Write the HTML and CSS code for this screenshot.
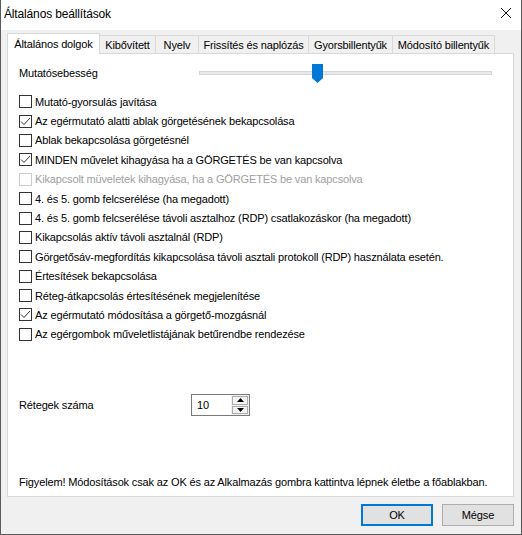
FILE: index.html
```html
<!DOCTYPE html>
<html lang="hu">
<head>
  <meta charset="UTF-8" />
  <meta name="viewport" content="width=device-width, initial-scale=1.0"/>
  <title>Általános beállítások</title>
  <link rel="stylesheet" href="styles.css">
</head>
<body>

  <div class="window">
    <header class="titlebar">
      <div class="title">Általános beállítások</div>
      <button class="btn-close" title="Bezárás">
        <svg width="10" height="10" viewBox="0 0 10 10">
          <path d="M0 0 L10 10 M10 0 L0 10" stroke="#111" stroke-width="1" fill="none"/>
        </svg>
      </button>
    </header>

    <div class="dialog-body">
      <div class="tabs">
        <div class="tab active">Általános dolgok</div>
        <div class="tab">Kibővített</div>
        <div class="tab">Nyelv</div>
        <div class="tab">Frissítés és naplózás</div>
        <div class="tab">Gyorsbillentyűk</div>
        <div class="tab">Módosító billentyűk</div>
      </div>

      <div class="panel">
        <div class="slider-row">
          <label class="slider-label">Mutatósebesség</label>
          <div class="slider">
            <div class="slider-track"></div>
            <svg class="slider-thumb" width="11" height="19" viewBox="0 0 11 19">
              <path d="M0 0 H11 V14 L5.5 19 L0 14 Z" fill="#0078d7"/>
            </svg>
          </div>
        </div>

        <div class="checklist">
          <div class="check-row"><span class="box"></span>Mutató-gyorsulás javítása</div>
          <div class="check-row"><span class="box checked"></span>Az egérmutató alatti ablak görgetésének bekapcsolása</div>
          <div class="check-row"><span class="box"></span>Ablak bekapcsolása görgetésnél</div>
          <div class="check-row"><span class="box checked"></span>MINDEN művelet kihagyása ha a GÖRGETÉS be van kapcsolva</div>
          <div class="check-row disabled"><span class="box"></span>Kikapcsolt müveletek kihagyása, ha a GÖRGETÉS be van kapcsolva</div>
          <div class="check-row"><span class="box"></span>4. és 5. gomb felcserélése (ha megadott)</div>
          <div class="check-row"><span class="box"></span>4. és 5. gomb felcserélése távoli asztalhoz (RDP) csatlakozáskor (ha megadott)</div>
          <div class="check-row"><span class="box"></span>Kikapcsolás aktív távoli asztalnál (RDP)</div>
          <div class="check-row"><span class="box"></span>Görgetősáv-megfordítás kikapcsolása távoli asztali protokoll (RDP) használata esetén.</div>
          <div class="check-row"><span class="box"></span>Értesítések bekapcsolása</div>
          <div class="check-row"><span class="box"></span>Réteg-átkapcsolás értesítésének megjelenítése</div>
          <div class="check-row"><span class="box checked"></span>Az egérmutató módosítása a görgető-mozgásnál</div>
          <div class="check-row"><span class="box"></span>Az egérgombok műveletlistájának betűrendbe rendezése</div>
        </div>

        <div class="layer-row">
          <label class="layer-label">Rétegek száma</label>
          <div class="spinner">
            <div class="spinner-value">10</div>
            <div class="spinner-buttons">
              <div class="spin-btn">
                <svg width="7" height="4" viewBox="0 0 7 4"><path d="M0 4 L3.5 0 L7 4 Z" fill="#000"/></svg>
              </div>
              <div class="spin-btn">
                <svg width="7" height="4" viewBox="0 0 7 4"><path d="M0 0 L7 0 L3.5 4 Z" fill="#000"/></svg>
              </div>
            </div>
          </div>
        </div>

        <p class="notice">Figyelem! Módosítások csak az OK és az Alkalmazás gombra kattintva lépnek életbe a főablakban.</p>
      </div>

      <div class="buttons">
        <button class="btn btn-default">OK</button>
        <button class="btn">Mégse</button>
      </div>
    </div>
  </div>

  <script>
    // pipák a bejelölt dobozokba
    document.querySelectorAll('.box.checked').forEach(function (box) {
      box.innerHTML = '<svg width="11" height="11" viewBox="0 0 11 11">' +
        '<path d="M1 5.5 L4 8.5 L10 2" stroke="#333" stroke-width="1" fill="none"/></svg>';
    });
  </script>
</body>
</html>
```

FILE: styles.css
```css
body {
  font-family: 'Liberation Sans', Arial, sans-serif;
  font-size: 11px;
  letter-spacing: -0.15px;
  color: #000;
  margin: 0;
  background: #fff;
}

.window {
  width: 522px;
  height: 535px;
  box-sizing: border-box;
  display: flex;
  flex-direction: column;
  background: #f0f0f0;
  border: 1px solid #5a5a5a;
  border-top: none;
}

.titlebar {
  height: 30px;
  background: #fff;
  display: flex;
  justify-content: space-between;
  align-items: center;
  padding-left: 3px;
}

.title {
  font-size: 12px;
  margin-top: -3px;
}

.btn-close {
  background: none;
  border: none;
  padding: 0;
  width: 10px;
  height: 10px;
  margin: -4px 10px 0 0;
  display: flex;
}

.dialog-body {
  flex: 1;
  display: flex;
  flex-direction: column;
  padding: 3px 7px 8px 6px;
}

/* fülek */
.tabs {
  display: grid;
  grid-template-columns: 93px 56px 43px 110px 84px 102px;
  height: 20px;
  align-items: end;
}

.tab {
  height: 18px;
  box-sizing: border-box;
  border: 1px solid #d9d9d9;
  border-bottom: none;
  border-left: none;
  display: flex;
  align-items: center;
  justify-content: center;
  background: #f0f0f0;
  white-space: nowrap;
}

.tab.active {
  height: 21px;
  margin-bottom: -1px;
  background: #fff;
  border-left: 1px solid #d9d9d9;
  position: relative;
  z-index: 1;
  padding-bottom: 1px;
}

.panel {
  flex: 1;
  background: #fff;
  border: 1px solid #d9d9d9;
  display: flex;
  flex-direction: column;
  padding: 9px 0 6px 11px;
}

/* csúszka */
.slider-row {
  display: flex;
  align-items: center;
  height: 20px;
}

.slider-label {
  width: 180px;
}

.slider {
  position: relative;
  width: 293px;
  height: 20px;
  display: flex;
  align-items: center;
}

.slider-track {
  width: 100%;
  height: 4px;
  box-sizing: border-box;
  background: #e7eaea;
  border: 1px solid #d6d6d6;
}

.slider-thumb {
  position: absolute;
  left: 113px;
  top: 1px;
}

/* jelölőnégyzetek */
.checklist {
  margin-top: 9px;
  display: flex;
  flex-direction: column;
}

.check-row {
  height: 19.4px;
  display: flex;
  align-items: center;
  white-space: nowrap;
}

.box {
  width: 13px;
  height: 13px;
  box-sizing: border-box;
  border: 1px solid #333;
  background: #fff;
  margin-right: 3px;
  flex-shrink: 0;
  display: flex;
  align-items: center;
  justify-content: center;
}

.check-row.disabled {
  color: #a0a0a0;
}

.check-row.disabled .box {
  border-color: #cccccc;
}

/* rétegek */
.layer-row {
  margin-top: 50px;
  display: flex;
  align-items: center;
}

.layer-label {
  width: 172px;
}

.spinner {
  display: flex;
  width: 59px;
  height: 22px;
  box-sizing: border-box;
  border: 1px solid #7a7a7a;
  background: #fff;
}

.spinner-value {
  flex: 1;
  padding-left: 5px;
  display: flex;
  align-items: center;
}

.spinner-buttons {
  width: 18px;
  display: flex;
  flex-direction: column;
  background: #f0f0f0;
  padding: 1px;
  box-sizing: border-box;
  gap: 1px;
}

.spin-btn {
  flex: 1;
  background: #f3f3f3;
  border: 1px solid #adadad;
  display: flex;
  align-items: center;
  justify-content: center;
}

.notice {
  margin: auto 0 0;
  line-height: 16px;
  white-space: nowrap;
}

/* gombok */
.buttons {
  display: flex;
  justify-content: flex-end;
  gap: 9px;
  margin-top: 7px;
}

.btn {
  width: 72px;
  height: 22px;
  font-family: inherit;
  font-size: 11px;
  letter-spacing: inherit;
  background: #e1e1e1;
  border: 1px solid #adadad;
  padding: 0;
  color: #000;
}

.btn-default {
  border: 2px solid #0078d7;
}
```
